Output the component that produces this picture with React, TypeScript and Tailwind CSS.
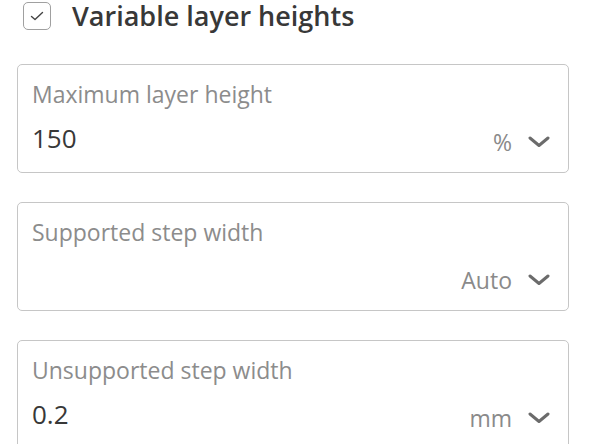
import React from "react";

function Chevron() {
  return (
    <svg width="22" height="12" viewBox="0 0 22 12" className="block">
      <polyline points="2,2 11,9.5 20,2" fill="none" stroke="#6b6b6b" strokeWidth="3" strokeLinecap="round" strokeLinejoin="round" />
    </svg>
  );
}

function Field({ label, value, unit }: { label: string; value: string; unit: string }) {
  return (
    <div className="h-[109px] rounded-[5px] border-[1.5px] border-[#c6c6c6] pl-[14px] pr-[18px] pt-[14px] flex flex-col">
      <div className="text-[23px] leading-[30px] text-[#8c8c8c]">{label}</div>
      <div className="mt-[12px] h-[34px] flex items-start justify-between">
        <div className="text-[26px] leading-[34px] text-[#383838]">{value}</div>
        <div className="mt-[6px] flex items-center gap-[16px]">
          <span className="text-[23px] leading-[30px] text-[#8a8a8a]">{unit}</span>
          <Chevron />
        </div>
      </div>
    </div>
  );
}

export default function App() {
  return (
    <div className="w-[592px] h-[444px] bg-white overflow-hidden" style={{ fontFamily: '"Open Sans", "Noto Sans", sans-serif' }}>
      <div className="ml-[23px] h-[32px] flex items-center gap-[21px]">
        <div className="w-[28px] h-[28px] rounded-[5px] border-[1.5px] border-[#a0a0a0] flex items-center justify-center">
          <svg width="16" height="12" viewBox="0 0 16 12">
            <polyline points="2.5,6.5 6,9.5 13.5,2.5" fill="none" stroke="#444" strokeWidth="1.4" strokeLinecap="round" strokeLinejoin="round" />
          </svg>
        </div>
        <div className="text-[27px] leading-[32px] font-semibold text-[#383838] whitespace-nowrap">Variable layer heights</div>
      </div>
      <div className="mt-[32px] ml-[17px] w-[552px] flex flex-col gap-[29px]">
        <Field label="Maximum layer height" value="150" unit="%" />
        <Field label="Supported step width" value="" unit="Auto" />
        <Field label="Unsupported step width" value="0.2" unit="mm" />
      </div>
    </div>
  );
}
